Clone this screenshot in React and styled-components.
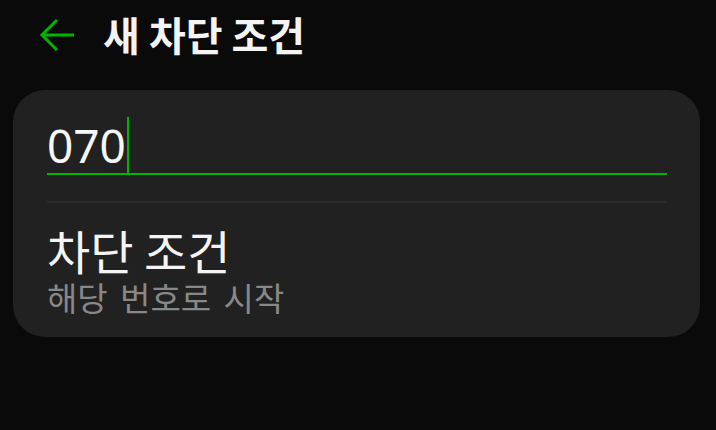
import React from "react";
import styled, { createGlobalStyle } from "styled-components";

const Global = createGlobalStyle`
  html, body { margin: 0; padding: 0; background: #0a0a0a; }
  body { font-family: "Noto Sans", "Noto Sans CJK KR", sans-serif; }
`;

const Page = styled.div`
  width: 716px;
  height: 430px;
  background: #0a0a0a;
  display: flex;
  flex-direction: column;
`;

const Header = styled.header`
  height: 70px;
  display: flex;
  align-items: center;
  padding-left: 38px;
  box-sizing: border-box;
`;

const BackButton = styled.button`
  width: 38px;
  height: 38px;
  padding: 0;
  border: 0;
  background: none;
  display: flex;
  align-items: center;
  justify-content: center;
  margin-right: 27px;
`;

const Title = styled.h1`
  margin: 0;
  font-family: "Noto Sans CJK KR", sans-serif;
  font-weight: 700;
  font-size: 40px;
  line-height: 1;
  color: #f4f4f4;
  transform: translateY(-1px);
`;

const Card = styled.section`
  margin: 20px 16px 0 13px;
  background: #212121;
  border-radius: 32px;
  padding: 0 33px 0 34px;
  height: 247px;
  box-sizing: border-box;
  display: flex;
  flex-direction: column;
`;

const InputWrap = styled.div`
  height: 85px;
  border-bottom: 2px solid #00b400;
  display: flex;
  align-items: flex-end;
  box-sizing: border-box;
`;

const InputText = styled.div`
  font-family: "Noto Sans", sans-serif;
  font-size: 46px;
  line-height: 55px;
  color: #f6f6f6;
  display: flex;
  align-items: flex-end;
  height: 55px;
`;

const Caret = styled.span`
  display: inline-block;
  width: 2.5px;
  height: 56px;
  background: #00b400;
  margin-left: 1px;
`;

const Divider = styled.div`
  height: 2px;
  background: #2c2c2c;
  margin-top: 26px;
`;

const Row = styled.div`
  display: flex;
  flex-direction: column;
  padding-top: 20px;
`;

const RowTitle = styled.div`
  font-family: "Noto Sans CJK KR", sans-serif;
  font-size: 47px;
  line-height: 54px;
  color: #f4f4f4;
`;

const RowSub = styled.div`
  font-family: "Noto Sans CJK KR", sans-serif;
  font-size: 33px;
  line-height: 40px;
  color: #888888;
  word-spacing: 5px;
`;

export default function App() {
  return (
    <Page>
      <Global />
      <Header>
        <BackButton aria-label="back">
          <svg width="38" height="38" viewBox="0 0 38 38" fill="none">
            <path d="M36 19H4M19 4L4 19L19 34" stroke="#00b400" strokeWidth="3" />
          </svg>
        </BackButton>
        <Title>새 차단 조건</Title>
      </Header>
      <Card>
        <InputWrap>
          <InputText>
            070
            <Caret />
          </InputText>
        </InputWrap>
        <Divider />
        <Row>
          <RowTitle>차단 조건</RowTitle>
          <RowSub>해당 번호로 시작</RowSub>
        </Row>
      </Card>
    </Page>
  );
}
